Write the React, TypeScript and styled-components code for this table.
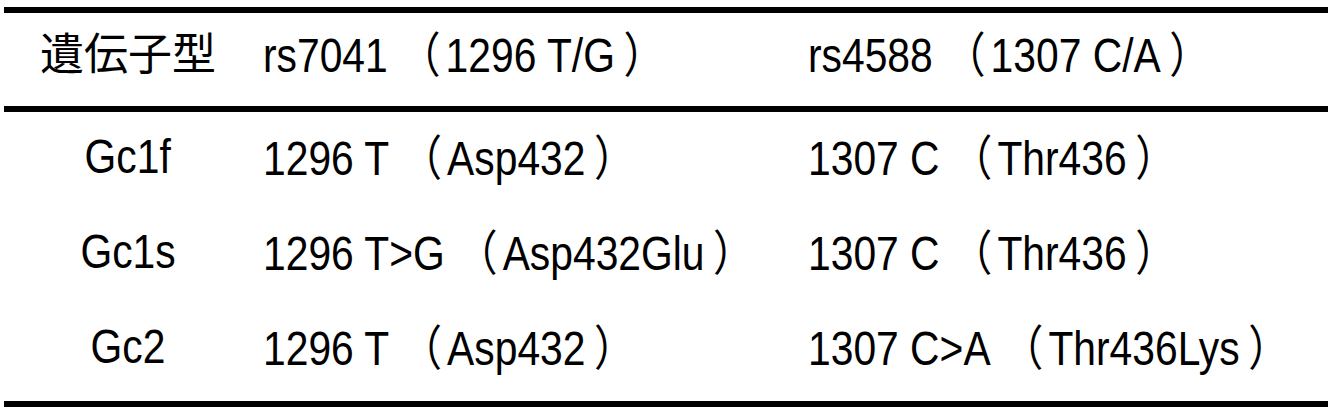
import React from 'react';
import styled, { createGlobalStyle } from 'styled-components';

const GlobalStyle = createGlobalStyle`
  html, body {
    margin: 0;
    padding: 0;
    background: #fff;
  }
`;

const Page = styled.div`
  width: 1336px;
  height: 416px;
  box-sizing: border-box;
  padding: 7px 8px 0 4px;
  font-family: "Liberation Sans", Arial, "Noto Sans CJK JP", sans-serif;
  font-size: 48px;
  line-height: 1;
  color: #000;
`;

const Table = styled.div`
  border-top: 6px solid #000;
  border-bottom: 6px solid #000;
`;

const Row = styled.div<{ $head?: boolean }>`
  display: grid;
  grid-template-columns: 259px 545px 1fr;
  align-items: center;
  box-sizing: border-box;
  height: ${p => (p.$head ? '99px' : '95px')};
  padding-bottom: ${p => (p.$head ? '12px' : '6px')};
  border-bottom: ${p => (p.$head ? '6px solid #000' : 'none')};
`;

const Body = styled.div`
  padding-bottom: 4px;
`;

const Cell = styled.div<{ $center?: boolean }>`
  white-space: nowrap;
  text-align: ${p => (p.$center ? 'center' : 'left')};
  padding-right: ${p => (p.$center ? '11px' : '0')};
`;

// the source face is a narrow grotesque; squeeze Arial metrics to match
const Narrow = styled.span<{ $center?: boolean }>`
  display: inline-block;
  transform: scaleX(0.85);
  transform-origin: ${p => (p.$center ? 'center' : 'left')} center;
`;

const Jp = styled.span`
  font-family: "Noto Sans CJK JP", sans-serif;
  font-size: 44px;
`;

const Bracket = styled.span<{ $close?: boolean }>`
  display: inline-block;
  font-family: "Noto Sans CJK JP", sans-serif;
  padding-left: ${p => (p.$close ? '10px' : '14px')};
  padding-right: ${p => (p.$close ? '0' : '6px')};
`;

const rows = [
  { type: 'Gc1f', a: '1296 T', aa: 'Asp432', b: '1307 C', bb: 'Thr436' },
  { type: 'Gc1s', a: '1296 T>G', aa: 'Asp432Glu', b: '1307 C', bb: 'Thr436' },
  { type: 'Gc2', a: '1296 T', aa: 'Asp432', b: '1307 C>A', bb: 'Thr436Lys' },
];

function Paren ({ main, note }: { main: string; note: string }) {
  return (
    <Narrow>
      {main}<Bracket>（</Bracket>{note}<Bracket $close>）</Bracket>
    </Narrow>
  );
}

export default function App () {
  return (
    <Page>
      <GlobalStyle />
      <Table>
        <Row $head>
          <Cell $center><Jp>遺伝子型</Jp></Cell>
          <Cell><Paren main='rs7041' note='1296 T/G' /></Cell>
          <Cell><Paren main='rs4588' note='1307 C/A' /></Cell>
        </Row>
        <Body>
          {rows.map((r) => (
            <Row key={r.type}>
              <Cell $center><Narrow $center>{r.type}</Narrow></Cell>
              <Cell><Paren main={r.a} note={r.aa} /></Cell>
              <Cell><Paren main={r.b} note={r.bb} /></Cell>
            </Row>
          ))}
        </Body>
      </Table>
    </Page>
  );
}
